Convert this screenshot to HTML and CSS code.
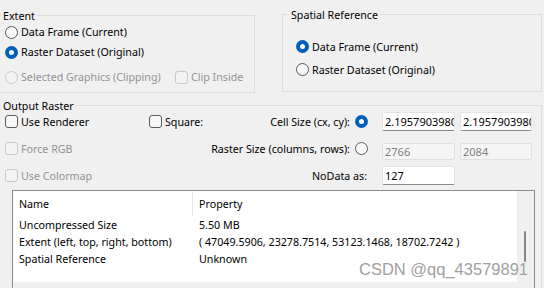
FILE: index.html
```html
<!DOCTYPE html>
<html lang="en">
<head>
  <meta charset="UTF-8" />
  <title>Export Raster Data</title>
  <link rel="stylesheet" href="styles.css">
</head>
<body>
  <div class="top">
    <div class="group extent">
      <span class="caption">Extent</span>
      <label class="opt"><span class="radio"></span>Data Frame (Current)</label>
      <label class="opt"><span class="radio on"></span>Raster Dataset (Original)</label>
      <div class="opt-row">
        <label class="opt off wide"><span class="radio"></span>Selected Graphics (Clipping)</label>
        <label class="opt off"><span class="check"></span>Clip Inside</label>
      </div>
    </div>
    <div class="group spatial">
      <span class="caption">Spatial Reference</span>
      <label class="opt"><span class="radio on"></span>Data Frame (Current)</label>
      <label class="opt"><span class="radio"></span>Raster Dataset (Original)</label>
    </div>
  </div>

  <div class="group output">
    <span class="caption">Output Raster</span>
    <div class="settings">
      <label class="opt"><span class="check"></span>Use Renderer</label>
      <label class="opt"><span class="check"></span>Square:</label>
      <span class="field-label">Cell Size (cx, cy):</span>
      <span class="radio on pick"></span>
      <input class="field" type="text" value="2.1957903980">
      <input class="field" type="text" value="2.1957903980">

      <label class="opt off"><span class="check"></span>Force RGB</label>
      <span></span>
      <span class="field-label">Raster Size (columns, rows):</span>
      <span class="radio pick"></span>
      <input class="field low" type="text" value="2766" disabled>
      <input class="field low" type="text" value="2084" disabled>

      <label class="opt off"><span class="check"></span>Use Colormap</label>
      <span></span>
      <span class="field-label nodata">NoData as:</span>
      <input class="field" type="text" value="127">
    </div>

    <div class="list">
      <div class="list-body">
        <div class="list-grid">
          <div class="head sep">Name</div>
          <div class="head">Property</div>
          <div>Uncompressed Size</div>
          <div>5.50 MB</div>
          <div>Extent (left, top, right, bottom)</div>
          <div>( 47049.5906, 23278.7514, 53123.1468, 18702.7242 )</div>
          <div>Spatial Reference</div>
          <div>Unknown</div>
        </div>
        <div class="vscroll"><span class="thumb"></span></div>
      </div>
      <div class="hscroll"></div>
    </div>
  </div>

  <div class="watermark">CSDN @qq_43579891</div>
</body>
</html>
```

FILE: styles.css
```css
body {
  margin: 0;
  width: 544px;
  height: 288px;
  overflow: hidden;
  position: relative;
  background-color: #f0f0f0;
  font-family: "Noto Sans", "Open Sans", sans-serif;
  font-size: 10.7px;
  color: #000;
}
.top {
  display: flex;
  align-items: flex-start;
  gap: 27px;
  padding-top: 14px;
}
.group {
  position: relative;
  box-sizing: border-box;
  border: 1px solid #dcdcdc;
}
.caption {
  position: absolute;
  top: -8px;
  left: 1px;
  padding: 0 2px;
  line-height: 16px;
  background-color: #f0f0f0;
}

/* extent + spatial reference boxes */
.extent {
  margin-left: -1px;
  margin-top: 1px;
  width: 256px;
  height: 78px;
  padding: 6px 0 0 5px;
}
.spatial {
  width: 260px;
  height: 78px;
  padding: 20px 0 0 13px;
}
.spatial .caption {
  left: 6px;
}
.spatial .opt {
  height: 23px;
}
.opt {
  display: flex;
  align-items: center;
  gap: 3px;
  height: 20px;
  white-space: nowrap;
}
.opt-row {
  display: flex;
  margin-top: 5px;
}
.opt.wide {
  width: 170px;
}
.off {
  color: #939393;
}

/* radio + check boxes */
.radio,
.check {
  flex: none;
  box-sizing: border-box;
  width: 13px;
  height: 13px;
  border: 1px solid #5b5b5b;
  background-color: #f8f8f8;
}
.radio {
  border-radius: 50%;
}
.check {
  border-radius: 3px;
}
.radio.on {
  display: flex;
  align-items: center;
  justify-content: center;
  border: none;
  background-color: #005fb8;
}
.radio.on::after {
  content: "";
  width: 5px;
  height: 5px;
  border-radius: 50%;
  background-color: #fff;
}
.off .radio,
.off .check {
  border-color: #c8c8c8;
  background-color: #f3f3f3;
}

/* output raster */
.output {
  margin-left: -1px;
  margin-top: 12px;
  width: 543px;
  border-bottom: none;
  padding: 2px 0 0 5px;
}
.settings {
  display: grid;
  grid-template-columns: 144px 56px 145px 32px 78px 72px;
  grid-template-rows: 27px 27px 27px;
  align-items: center;
}
.field-label {
  text-align: right;
  white-space: nowrap;
}
.field-label.nodata {
  grid-column: 3 / span 2;
  padding-right: 15px;
}
.pick {
  margin-left: 5px;
}
.field {
  box-sizing: border-box;
  width: 73px;
  height: 19px;
  margin: 0;
  padding: 0 0 0 2px;
  border: 1px solid #e3e3e3;
  border-bottom-color: #888;
  border-radius: 2px;
  background-color: #fff;
  font-family: inherit;
  font-size: 11px;
  color: #000;
  outline: none;
}
.settings .field:nth-of-type(2n) {
  width: 72px;
}
.field.low {
  height: 17px;
  margin-top: 6px;
  border-color: #e0e0e0;
  background-color: #f5f5f5;
  color: #808080;
}

/* property list */
.list {
  margin: 1px 0 0 7px;
  width: 521px;
  border: 1px solid #8c8c8c;
  border-bottom: none;
  background-color: #f0f0f0;
}
.list-body {
  display: flex;
  height: 91px;
}
.list-grid {
  flex: 1;
  display: grid;
  grid-template-columns: 180px 1fr;
  grid-template-rows: 25px;
  grid-auto-rows: 17px;
  align-items: center;
  align-content: start;
  background-color: #fff;
  white-space: nowrap;
}
.list-grid > div {
  padding-left: 6px;
}
.list-grid .head {
  align-self: stretch;
  display: flex;
  align-items: center;
  margin-top: 1px;
}
.list-grid .sep {
  border-right: 1px solid #e5e5e5;
}
.vscroll {
  position: relative;
  width: 17px;
  background-color: #f0f0f0;
}
.thumb {
  position: absolute;
  left: 7px;
  top: 40px;
  width: 2px;
  height: 31px;
  border-radius: 1px;
  background-color: #858585;
}
.hscroll {
  height: 6px;
  background-color: #f0f0f0;
}

.watermark {
  position: absolute;
  left: 359px;
  top: 260px;
  font-family: "Liberation Sans", Arial, sans-serif;
  font-size: 16.5px;
  color: #a0a0a0;
  text-shadow: 0 0 1px #fff;
}
```
